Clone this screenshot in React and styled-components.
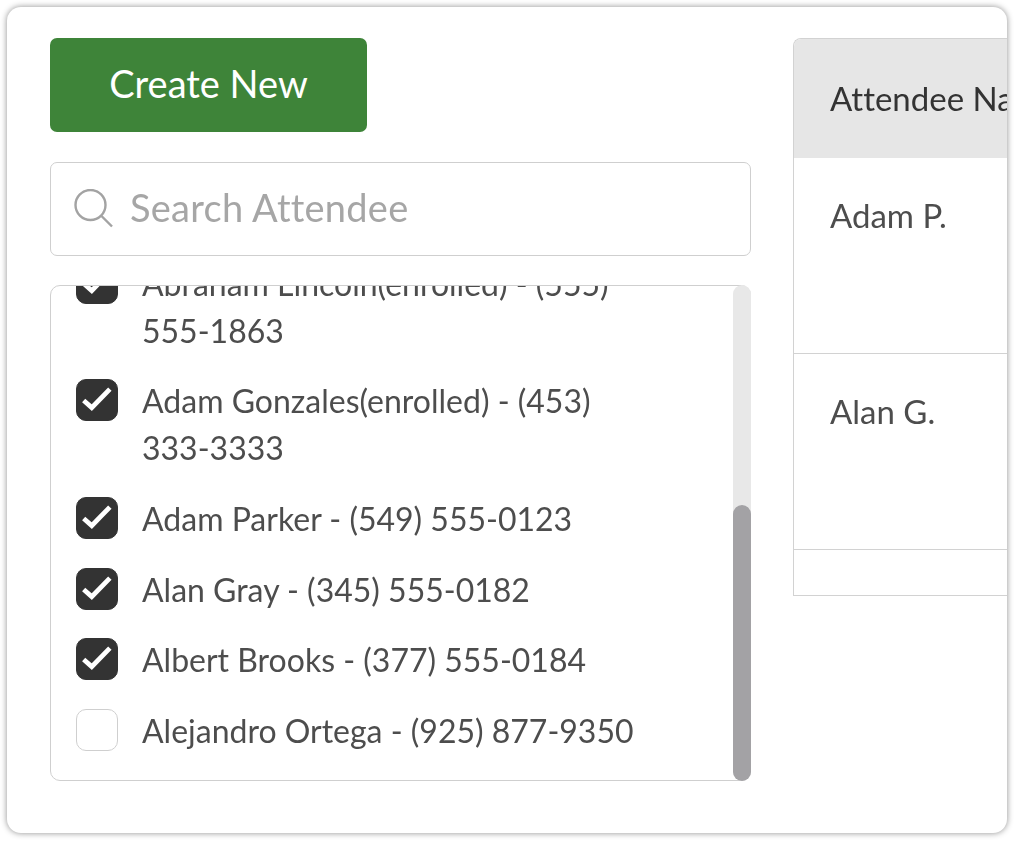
import React, { useLayoutEffect, useRef } from "react";
import styled, { createGlobalStyle } from "styled-components";

const Global = createGlobalStyle`
  html, body { margin: 0; padding: 0; background: #fff; overflow: hidden; }
  * { box-sizing: border-box; }
  body {
    font-family: "Lato", "Liberation Sans", sans-serif;
    font-variant-ligatures: none;
  }
`;
const Page = styled.div`
  width: 1015px;
  height: 841px;
  padding: 7px 8px 8px 7px;
  filter: blur(0.45px);
`;
const Card = styled.main`
  height: 826px;
  display: flex;
  gap: 42px;
  padding: 31px 0 0 43px;
  background: #fff;
  border-radius: 14px;
  box-shadow: 0 0 6px rgba(0, 0, 0, 0.45);
  overflow: hidden;
`;
const LeftColumn = styled.section`
  width: 701px;
  flex: none;
  display: flex;
  flex-direction: column;
`;
const CreateButton = styled.button`
  width: 317px;
  height: 94px;
  border: 0;
  border-radius: 7px;
  background: #3e8439;
  color: #fff;
  font: 400 38px "Lato", sans-serif;
  font-variant-ligatures: none;
  padding: 0 0 4px;
`;
const SearchBox = styled.label`
  height: 94px;
  margin-top: 30px;
  display: flex;
  align-items: center;
  gap: 16px;
  padding: 0 22px 0 23px;
  border: 1px solid #cfcfcf;
  border-radius: 7px;
`;
const SearchInput = styled.input`
  flex: 1;
  min-width: 0;
  border: 0;
  outline: 0;
  padding: 0 0 5px;
  background: transparent;
  color: #4a4a4a;
  font: 400 38px "Lato", sans-serif;
  letter-spacing: 0.25px;
  font-variant-ligatures: none;
  &::placeholder { color: #a6a6a6; opacity: 1; }
`;
const ListFrame = styled.div`
  position: relative;
  height: 496px;
  margin-top: 29px;
`;
const List = styled.ul`
  height: 100%;
  margin: 0;
  padding: 0 110px 13px 0;
  list-style: none;
  border: 1px solid #cfcfcf;
  border-radius: 10px;
  overflow: hidden;
`;
const Track = styled.div`
  position: absolute;
  top: 0;
  right: 0;
  bottom: 0;
  width: 18px;
  display: flex;
  flex-direction: column;
  justify-content: flex-end;
  background: #e8e8e8;
  border-radius: 9px;
`;
const Thumb = styled.div`
  height: 276px;
  background: #a3a2a5;
  border-radius: 9px;
`;
const Row = styled.li`
  display: flex;
  gap: 24px;
  padding: 12px 0 12px 25px;
  color: #4d4d4d;
  font-size: 32px;
  line-height: 46.7px;
`;
const Box = styled.span`
  width: 42px;
  height: 42px;
  flex: none;
  margin-top: 1px;
  border-radius: 10px;
  background: ${(p) => (p.$checked ? "#333" : "#fff")};
  border: 1px solid ${(p) => (p.$checked ? "#333" : "#cfcfcf")};
  display: flex;
  align-items: center;
  justify-content: center;
`;
const Label = styled.span`
  flex: 1;
`;
const Table = styled.table`
  width: 640px;
  height: 558px;
  flex: none;
  align-self: flex-start;
  border-collapse: separate;
  border-spacing: 0;
  border: solid #d2d2d2;
  border-width: 1px 0 1px 1px;
  border-top-left-radius: 8px;
  color: #4d4d4d;
  font-size: 33px;
  text-align: left;
  overflow: hidden;
`;
const HeadCell = styled.th`
  height: 119px;
  padding: 0 36px 2px;
  background: #e6e6e6;
  color: #333;
  font-weight: 400;
  vertical-align: middle;
`;
const Cell = styled.td`
  height: ${(p) => p.$height}px;
  padding: 34px 36px 0;
  vertical-align: top;
  line-height: 47px;
  border-bottom: ${(p) => (p.$last ? "0" : "1px solid #d2d2d2")};
`;

const Check = () => (
  <svg width="42" height="42" viewBox="0 0 42 42" fill="none" aria-hidden="true">
    <path d="M7 21.5 L15.5 29 L34.5 9.5" stroke="#fff" strokeWidth="5" />
  </svg>
);
const SearchIcon = () => (
  <svg width="40" height="40" viewBox="0 0 40 40" fill="none" stroke="#a3a3a3" strokeWidth="2.4" aria-hidden="true" style={{ flex: "none" }}>
    <circle cx="16.5" cy="16" r="15" />
    <path d="M27.5 27 L38 37.5" />
  </svg>
);

const people = [
  ["Abraham Lincoln(enrolled) - (555) 555-1863", true],
  ["Adam Gonzales(enrolled) - (453) 333-3333", true],
  ["Adam Parker - (549) 555-0123", true],
  ["Alan Gray - (345) 555-0182", true],
  ["Albert Brooks - (377) 555-0184", true],
  ["Alejandro Ortega - (925) 877-9350", false],
];

export default function App() {
  const listRef = useRef(null);
  useLayoutEffect(() => {
    listRef.current.scrollTop = listRef.current.scrollHeight;
  }, []);
  return (
    <Page>
      <Global />
      <Card>
        <LeftColumn>
          <CreateButton>Create New</CreateButton>
          <SearchBox>
            <SearchIcon />
            <SearchInput placeholder="Search Attendee" />
          </SearchBox>
          <ListFrame>
            <List ref={listRef}>
              {people.map(([name, checked]) => (
                <Row key={name}>
                  <Box $checked={checked}>{checked && <Check />}</Box>
                  <Label>{name}</Label>
                </Row>
              ))}
            </List>
            <Track><Thumb /></Track>
          </ListFrame>
        </LeftColumn>
        <Table>
          <thead>
            <tr><HeadCell>Attendee Name</HeadCell></tr>
          </thead>
          <tbody>
            <tr><Cell $height={196}>Adam P.</Cell></tr>
            <tr><Cell $height={196}>Alan G.</Cell></tr>
            <tr><Cell $height={45} $last /></tr>
          </tbody>
        </Table>
      </Card>
    </Page>
  );
}
